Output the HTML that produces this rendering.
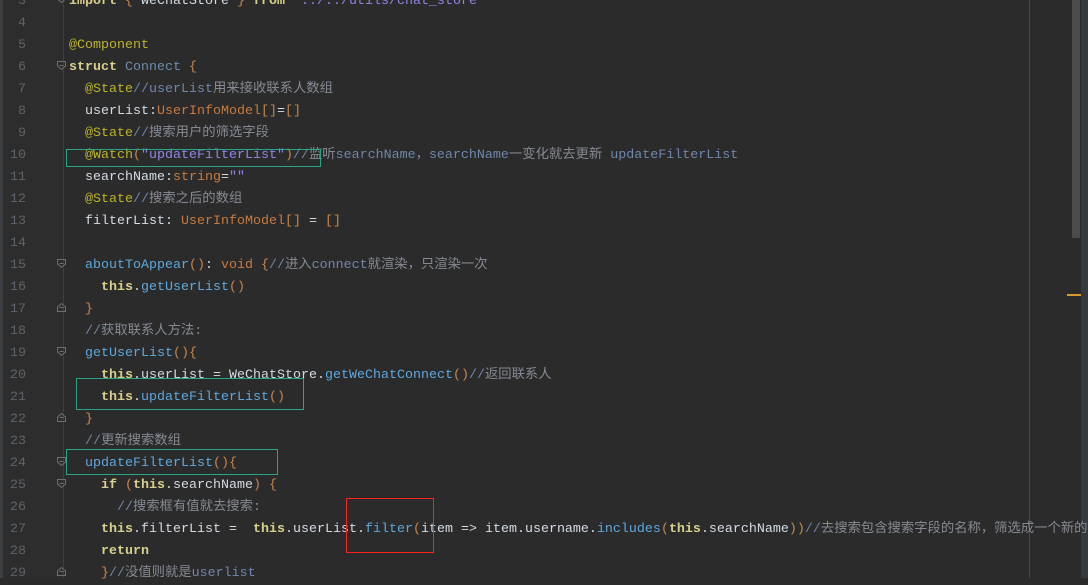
<!DOCTYPE html>
<html><head><meta charset="utf-8">
<style>
html,body{margin:0;padding:0;}
body{width:1088px;height:578px;overflow:hidden;background:#2b2b2b;position:relative;font-family:"Liberation Mono","Noto Sans CJK SC",monospace;font-size:13.33px;}
.strip{position:absolute;left:0;top:0;width:3px;height:578px;background:#3c3f41;}
.gut{position:absolute;left:3px;top:0;width:60px;height:578px;background:#2d2d2d;}
.gline{position:absolute;left:63px;top:0;width:1px;height:578px;background:#3c3f41;}
.wrap{position:absolute;left:0;top:2px;width:1088px;height:578px;}
.ln{position:absolute;left:0;width:26px;text-align:right;color:#5f6368;height:22px;line-height:22px;}
.code{position:absolute;left:69px;height:22px;line-height:22px;white-space:pre;color:#d4dbe3;}
.fold{position:absolute;left:57px;width:9px;height:9px;}
.k{color:#d9cf8d;font-weight:bold}
.t{color:#c87a3f}
.p{color:#c8884c}
.m{color:#5ea8dc}
.a{color:#bbb529}
.s{color:#8e86e8}
.c{color:#858a92}
.cs{color:#6f87aa}
.cl{color:#6e8cab}
.box{position:absolute;border:1px solid #2aa585;}
.red{position:absolute;border:1px solid #ff2020;}
.margin{position:absolute;left:1029px;top:0;width:1px;height:578px;background:#4a4a4a;}
.sb{position:absolute;left:1072px;top:0;width:8px;height:238px;background:#4b4b4b;}
.rs{position:absolute;left:1081px;top:0;width:7px;height:578px;background:#363a3f;}
.mark{position:absolute;left:1067px;top:294px;width:14px;height:2px;background:#d89a30;}
</style></head><body>
<div class="strip"></div><div class="gut"></div><div class="gline"></div>
<div class="margin"></div><div class="sb"></div><div class="rs"></div><div class="mark"></div>

<svg class="fold" style="top:-6px" viewBox="0 0 9 9"><path d="M0.5 0.5H8.5V5L4.5 8.5L0.5 5Z M2.5 4.5H6.5" fill="none" stroke="#6b6e72"/></svg>
<svg class="fold" style="top:61px" viewBox="0 0 9 9"><path d="M0.5 0.5H8.5V5L4.5 8.5L0.5 5Z M2.5 4.5H6.5" fill="none" stroke="#6b6e72"/></svg>
<svg class="fold" style="top:259px" viewBox="0 0 9 9"><path d="M0.5 0.5H8.5V5L4.5 8.5L0.5 5Z M2.5 4.5H6.5" fill="none" stroke="#6b6e72"/></svg>
<svg class="fold" style="top:303px" viewBox="0 0 9 9"><path d="M0.5 8.5H8.5V4L4.5 0.5L0.5 4Z M2.5 4.5H6.5" fill="none" stroke="#6b6e72"/></svg>
<svg class="fold" style="top:347px" viewBox="0 0 9 9"><path d="M0.5 0.5H8.5V5L4.5 8.5L0.5 5Z M2.5 4.5H6.5" fill="none" stroke="#6b6e72"/></svg>
<svg class="fold" style="top:413px" viewBox="0 0 9 9"><path d="M0.5 8.5H8.5V4L4.5 0.5L0.5 4Z M2.5 4.5H6.5" fill="none" stroke="#6b6e72"/></svg>
<svg class="fold" style="top:457px" viewBox="0 0 9 9"><path d="M0.5 0.5H8.5V5L4.5 8.5L0.5 5Z M2.5 4.5H6.5" fill="none" stroke="#6b6e72"/></svg>
<svg class="fold" style="top:479px" viewBox="0 0 9 9"><path d="M0.5 0.5H8.5V5L4.5 8.5L0.5 5Z M2.5 4.5H6.5" fill="none" stroke="#6b6e72"/></svg>
<svg class="fold" style="top:567px" viewBox="0 0 9 9"><path d="M0.5 8.5H8.5V4L4.5 0.5L0.5 4Z M2.5 4.5H6.5" fill="none" stroke="#6b6e72"/></svg>

<div class="wrap">
<div class="ln" style="top:-11px">3</div>
<div class="ln" style="top:11px">4</div>
<div class="ln" style="top:33px">5</div>
<div class="ln" style="top:55px">6</div>
<div class="ln" style="top:77px">7</div>
<div class="ln" style="top:99px">8</div>
<div class="ln" style="top:121px">9</div>
<div class="ln" style="top:143px">10</div>
<div class="ln" style="top:165px">11</div>
<div class="ln" style="top:187px">12</div>
<div class="ln" style="top:209px">13</div>
<div class="ln" style="top:231px">14</div>
<div class="ln" style="top:253px">15</div>
<div class="ln" style="top:275px">16</div>
<div class="ln" style="top:297px">17</div>
<div class="ln" style="top:319px">18</div>
<div class="ln" style="top:341px">19</div>
<div class="ln" style="top:363px">20</div>
<div class="ln" style="top:385px">21</div>
<div class="ln" style="top:407px">22</div>
<div class="ln" style="top:429px">23</div>
<div class="ln" style="top:451px">24</div>
<div class="ln" style="top:473px">25</div>
<div class="ln" style="top:495px">26</div>
<div class="ln" style="top:517px">27</div>
<div class="ln" style="top:539px">28</div>
<div class="ln" style="top:561px">29</div>

<div class="code" style="top:-11px"><span class="k">import</span> <span class="p">{</span> WeChatStore <span class="p">}</span> <span class="k">from</span> <span class="s">'../../utils/chat_store'</span></div>
<div class="code" style="top:33px"><span class="a">@Component</span></div>
<div class="code" style="top:55px"><span class="k">struct</span> <span class="cl">Connect</span> <span class="p">{</span></div>
<div class="code" style="top:77px">  <span class="a">@State</span><span class="cs">//userList</span><span class="c">用来接收联系人数组</span></div>
<div class="code" style="top:99px">  userList:<span class="t">UserInfoModel</span><span class="p">[]</span>=<span class="p">[]</span></div>
<div class="code" style="top:121px">  <span class="a">@State</span><span class="cs">//</span><span class="c">搜索用户的筛选字段</span></div>
<div class="code" style="top:143px">  <span class="a">@Watch</span><span class="p">(</span><span class="s">"updateFilterList"</span><span class="p">)</span><span class="cs">//</span><span class="c">监听</span><span class="cs">searchName</span><span class="c">，</span><span class="cs">searchName</span><span class="c">一变化就去更新 </span><span class="cs">updateFilterList</span></div>
<div class="code" style="top:165px">  searchName:<span class="t">string</span>=<span class="s">""</span></div>
<div class="code" style="top:187px">  <span class="a">@State</span><span class="cs">//</span><span class="c">搜索之后的数组</span></div>
<div class="code" style="top:209px">  filterList: <span class="t">UserInfoModel</span><span class="p">[]</span> = <span class="p">[]</span></div>
<div class="code" style="top:253px">  <span class="m">aboutToAppear</span><span class="p">()</span>: <span class="t">void</span> <span class="p">{</span><span class="cs">//</span><span class="c">进入</span><span class="cs">connect</span><span class="c">就渲染，只渲染一次</span></div>
<div class="code" style="top:275px">    <span class="k">this</span>.<span class="m">getUserList</span><span class="p">()</span></div>
<div class="code" style="top:297px">  <span class="p">}</span></div>
<div class="code" style="top:319px">  <span class="cs">//</span><span class="c">获取联系人方法:</span></div>
<div class="code" style="top:341px">  <span class="m">getUserList</span><span class="p">(){</span></div>
<div class="code" style="top:363px">    <span class="k">this</span>.userList = WeChatStore.<span class="m">getWeChatConnect</span><span class="p">()</span><span class="cs">//</span><span class="c">返回联系人</span></div>
<div class="code" style="top:385px">    <span class="k">this</span>.<span class="m">updateFilterList</span><span class="p">()</span></div>
<div class="code" style="top:407px">  <span class="p">}</span></div>
<div class="code" style="top:429px">  <span class="cs">//</span><span class="c">更新搜索数组</span></div>
<div class="code" style="top:451px">  <span class="m">updateFilterList</span><span class="p">(){</span></div>
<div class="code" style="top:473px">    <span class="k">if</span> <span class="p">(</span><span class="k">this</span>.searchName<span class="p">)</span> <span class="p">{</span></div>
<div class="code" style="top:495px">      <span class="cs">//</span><span class="c">搜索框有值就去搜索:</span></div>
<div class="code" style="top:517px">    <span class="k">this</span>.filterList =  <span class="k">this</span>.userList.<span class="m">filter</span><span class="p">(</span>item =&gt; item.username.<span class="m">includes</span><span class="p">(</span><span class="k">this</span>.searchName<span class="p">))</span><span class="cs">//</span><span class="c">去搜索包含搜索字段的名称，筛选成一个新的</span></div>
<div class="code" style="top:539px">    <span class="k">return</span></div>
<div class="code" style="top:561px">    <span class="p">}</span><span class="cs">//</span><span class="c">没值则就是</span><span class="cs">userlist</span></div>
</div>

<div class="box" style="left:66px;top:149px;width:253px;height:16px;"></div>
<div class="box" style="left:76px;top:378px;width:226px;height:30px;"></div>
<div class="box" style="left:66px;top:449px;width:210px;height:24px;"></div>
<div class="red" style="left:346px;top:498px;width:86px;height:53px;"></div>
</body></html>
